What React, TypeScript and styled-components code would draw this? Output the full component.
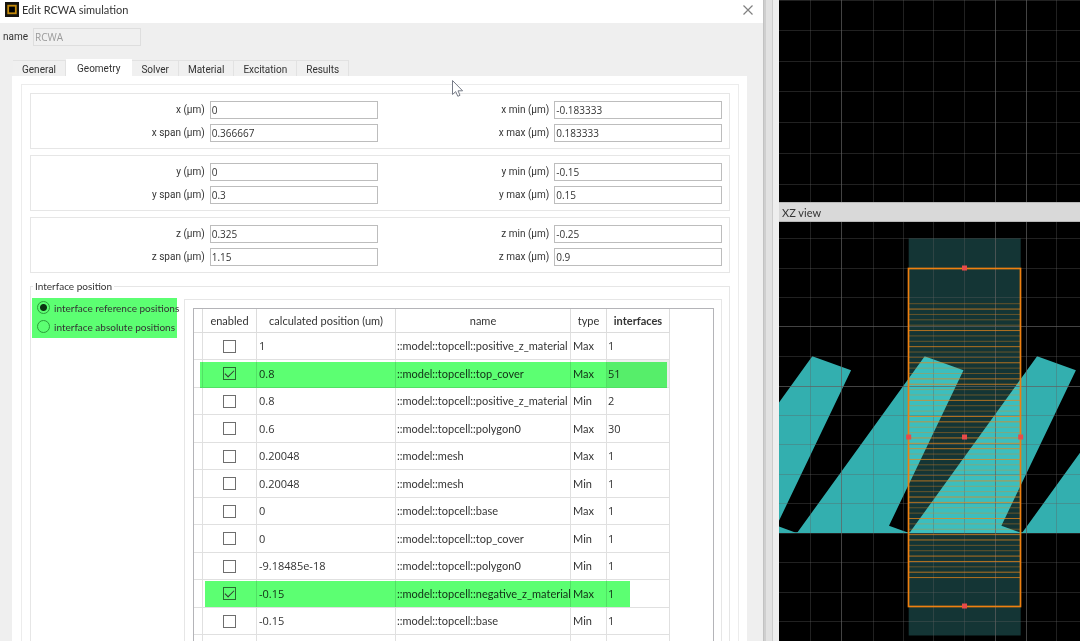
import React, { useState } from "react";
import styled, { createGlobalStyle, css } from "styled-components";

const valueFont = `"Open Sans", "Noto Sans", sans-serif`;
const headingFont = `Lato, "Open Sans", sans-serif`;

const GlobalStyle = createGlobalStyle`
  * { box-sizing: border-box; }
  body {
    margin: 0;
    background: #efefef;
    color: #333;
    font-family: Roboto, "Liberation Sans", sans-serif;
    font-size: 10px;
    line-height: 14px;
  }
  button, input { font: inherit; color: inherit; }
`;

const Page = styled.div`
  display: flex;
  height: 100vh;
  overflow: hidden;
`;

const Dialog = styled.main`
  position: relative;
  flex: 763 1 0;
  min-width: 0;
  display: flex;
  flex-direction: column;
`;

const TitleBar = styled.header`
  display: flex;
  align-items: center;
  flex: none;
  height: 23px;
  padding: 0 8px 4px 5px;
  gap: 3px;
  background: #fff;
`;

const Title = styled.h1`
  flex: 1;
  margin: 0;
  font-family: ${headingFont};
  font-size: 11px;
  font-weight: 400;
`;

const CloseButton = styled.button`
  display: flex;
  padding: 0;
  border: 0;
  background: none;
`;

const NameRow = styled.div`
  display: flex;
  align-items: center;
  flex: none;
  gap: 5px;
  padding: 5px 3px 13px;
`;

const NameInput = styled.input`
  width: 108px;
  height: 18px;
  padding: 0 1px;
  border: 1px solid #dedede;
  background: #f0f0f0;
  color: #9a9a9a;
  font-family: ${valueFont};
`;

const TabList = styled.div`
  display: flex;
  align-items: flex-end;
  flex: none;
  height: 17px;
  padding-left: 13px;
`;

const Tab = styled.button<{ $active: boolean }>`
  height: 16px;
  padding: 2px 9px 0;
  border: 1px solid #e2e2e2;
  border-width: 1px 1px 0 0;
  background: #f0f0f0;
  line-height: 12px;
  ${(p) =>
    p.$active &&
    css`
      height: 17px;
      padding: 1px 11px 0;
      border-color: #fff;
      background: #fff;
    `}
`;

const Pane = styled.section`
  flex: 1;
  min-height: 0;
  margin: 0 16px 0 12px;
  padding: 8px 8px 0 9px;
  background: #fff;
`;

const PaneFrame = styled.div`
  display: flex;
  flex-direction: column;
  gap: 6px;
  padding: 8px 8px 0;
  border: 1px solid #ececec;
  border-bottom: 0;
`;

const AxisGroup = styled.div`
  display: grid;
  grid-template-columns: 1fr 1fr;
  row-gap: 5px;
  padding: 7px 7px 6px 2px;
  border: 1px solid #e6e6e6;
`;

const Field = styled.label`
  display: grid;
  grid-template-columns: 172fr 168fr;
  column-gap: 5px;
  align-items: center;
  text-align: right;
`;

const ValueInput = styled.input`
  width: 100%;
  min-width: 0;
  height: 18px;
  padding: 0 1px;
  border: 1px solid #bdbdbd;
  background: #fff;
  font-family: ${valueFont};
`;

const InterfaceGroup = styled.fieldset`
  display: flex;
  align-items: flex-start;
  gap: 7px;
  min-width: 0;
  margin: 0;
  padding: 5px 7px 8px 1px;
  border: 1px solid #e6e6e6;
`;

const Legend = styled.legend`
  margin-left: 1px;
  padding: 0 2px;
  font-family: ${headingFont};
`;

const RadioList = styled.div`
  display: flex;
  flex-direction: column;
  justify-content: space-between;
  flex: none;
  width: 145px;
  height: 40px;
  padding: 2px 0 4px 5px;
  background: #5cff72;
  font-family: ${headingFont};
  white-space: nowrap;
`;

const RadioLabel = styled.label`
  display: flex;
  align-items: center;
  gap: 4px;
  height: 15px;
`;

const Radio = styled.input`
  appearance: none;
  flex: none;
  width: 13px;
  height: 13px;
  margin: 0;
  border: 1px solid #2c9c3a;
  border-radius: 50%;
  &:checked {
    background: radial-gradient(circle, #0b3512 0 3px, transparent 4px);
  }
`;

const TableFrame = styled.div`
  flex: 1;
  min-width: 0;
  margin-top: 1px;
  padding: 8px 7px 8px 8px;
  border: 1px solid #e6e6e6;
`;

const TableArea = styled.div`
  padding-right: 43px;
  border: 1px solid #b4b4b8;
`;

const Table = styled.table`
  width: 100%;
  table-layout: fixed;
  border-collapse: separate;
  border-spacing: 0;
  font-family: ${headingFont};
  font-size: 11px;
`;

const HeadCell = styled.th<{ $strong?: boolean }>`
  height: 24px;
  padding: 0;
  border: solid #dcdcdc;
  border-width: 0 1px 1px 0;
  font-weight: ${(p) => (p.$strong ? 700 : 400)};
  text-align: center;
  white-space: nowrap;
`;

const Row = styled.tr`
  position: relative;
  height: 27px;
  &:nth-child(even) { height: 28px; }
`;

const Cell = styled.td<{ $center?: boolean; $shaded?: boolean; $value?: boolean; $tight?: boolean }>`
  padding: 0 ${(p) => (p.$tight ? 1 : 2)}px;
  border: solid #e0e0e0;
  border-width: 0 1px 1px 0;
  background: ${(p) => (p.$shaded ? "#eeeeee" : "transparent")};
  font-family: ${(p) => (p.$value ? valueFont : "inherit")};
  text-align: ${(p) => (p.$center ? "center" : "left")};
  white-space: nowrap;
`;

const Marker = styled.span<{ $wide: boolean }>`
  position: absolute;
  inset: ${(p) => (p.$wide ? "2px 3px 0 6px" : "1px 40px 1px 11px")};
  background: #5cff72;
  mix-blend-mode: multiply;
  pointer-events: none;
`;

const CheckBox = styled.input`
  appearance: none;
  display: block;
  width: 13px;
  height: 13px;
  margin: 0 auto;
  border: 1px solid #6e6e6e;
  &:checked::after {
    content: "";
    display: block;
    width: 8px;
    height: 4px;
    margin: 2px 0 0 1px;
    border: solid #333;
    border-width: 0 0 1px 1px;
    transform: rotate(-45deg);
  }
`;

const Cursor = styled.svg`
  position: absolute;
  left: 451px;
  top: 79px;
`;

const Splitter = styled.div`
  flex: none;
  width: 16px;
  background: linear-gradient(
    to right,
    #c2c2c2 0 1px,
    #cfcfcf 1px 3px,
    #e2e2e2 3px 9px,
    #cccccc 9px 10px,
    #eeeeee 10px 16px
  );
`;

const Views = styled.aside`
  flex: 301 1 0;
  min-width: 0;
  display: flex;
  flex-direction: column;
  background: #000;
`;

const ViewHeader = styled.h2`
  flex: none;
  height: 20px;
  margin: 0;
  padding: 3px;
  border: solid #b8b8b8;
  border-width: 1px 0;
  background: #d9d9d9;
  font-family: ${headingFont};
  font-size: 11px;
  font-weight: 400;
`;

const TopCanvas = styled.svg`
  display: block;
  flex: none;
  width: 100%;
  height: 202px;
`;

const XZCanvas = styled.svg`
  display: block;
  flex: 1;
  width: 100%;
  min-height: 0;
`;

const axes = [
  { axis: "x", center: "0", span: "0.366667", min: "-0.183333", max: "0.183333" },
  { axis: "y", center: "0", span: "0.3", min: "-0.15", max: "0.15" },
  { axis: "z", center: "0.325", span: "1.15", min: "-0.25", max: "0.9" },
];

type InterfaceRow = {
  enabled?: boolean;
  marker?: "wide" | "narrow";
  position: string;
  name: string;
  type: "Max" | "Min";
  count: string;
};

const rows: InterfaceRow[] = [
  { position: "1", name: "::model::topcell::positive_z_material", type: "Max", count: "1" },
  { position: "0.8", name: "::model::topcell::top_cover", type: "Max", count: "51", enabled: true, marker: "wide" },
  { position: "0.8", name: "::model::topcell::positive_z_material", type: "Min", count: "2" },
  { position: "0.6", name: "::model::topcell::polygon0", type: "Max", count: "30" },
  { position: "0.20048", name: "::model::mesh", type: "Max", count: "1" },
  { position: "0.20048", name: "::model::mesh", type: "Min", count: "1" },
  { position: "0", name: "::model::topcell::base", type: "Max", count: "1" },
  { position: "0", name: "::model::topcell::top_cover", type: "Min", count: "1" },
  { position: "-9.18485e-18", name: "::model::topcell::polygon0", type: "Min", count: "1" },
  { position: "-0.15", name: "::model::topcell::negative_z_material", type: "Max", count: "1", enabled: true, marker: "narrow" },
  { position: "-0.15", name: "::model::topcell::base", type: "Min", count: "1" },
  { position: "", name: "", type: "Min", count: "" },
];

const tabs = ["General", "Geometry", "Solver", "Material", "Excitation", "Results"];

const gridX = [31.5, 62.5, 94.5, 124.5, 154.5, 185.5, 216.5, 247.5, 277.5];
const strongX = [62.5, 216.5, 247.5];
const topGridY = [0.5, 30.5, 61.5, 91.5, 122.5, 153.5, 184.5];
const xzGridY = [16.5, 46.5, 75.5, 104.5, 134.5, 164.5, 193.5, 222.5, 252.5, 281.5, 311.5, 340.5, 370.5, 399.5];
const strongXZ = [104.5, 164.5];

const layerCount = 52;
const strongLayers = [1, 5, 8, 11, 14, 15, 18, 21, 22, 25, 26, 27, 29, 33, 36, 37, 40, 43, 44, 47, 48, 50, 51];

function Grid({ xs, ys, strongYs }: { xs: number[]; ys: number[]; strongYs: number[] }) {
  return (
    <g stroke="#606060">
      {xs.map((x) => (
        <line key={`x${x}`} x1={x} x2={x} y1="0" y2="1000" opacity={strongX.includes(x) ? 0.7 : 0.35} />
      ))}
      {ys.map((y) => (
        <line key={`y${y}`} y1={y} y2={y} x1="0" x2="1000" opacity={strongYs.includes(y) ? 0.7 : 0.35} />
      ))}
    </g>
  );
}

function XZView() {
  return (
    <XZCanvas role="img" aria-label="XZ view of the slanted grating">
      <g fill="#33afaf">
        {[-112.4, 0, 112.4, 225].map((dx) => (
          <polygon key={dx} transform={`translate(${dx} 0)`} points="145.7,134.3 184.5,148.3 110,303.7 128,310.3 128,311 18,311" />
        ))}
        <rect x="0" y="310" width="301" height="1" opacity="0.8" />
      </g>
      <rect x="129.7" y="16.3" width="112" height="397.2" fill="rgb(92,244,244)" opacity="0.217" />
      <Grid xs={gridX} ys={xzGridY} strongYs={strongXZ} />
      <g stroke="#e8861a">
        {Array.from({ length: layerCount }, (_, i) => {
          const y = 81.7 + i * 5.37;
          return <line key={i} x1="130" x2="241" y1={y} y2={y} opacity={strongLayers.includes(i) ? 0.75 : 0.38} />;
        })}
      </g>
      <rect x="129.5" y="46.5" width="112" height="338" fill="none" stroke="#ee8010" strokeWidth="1.7" />
      <g fill="#e84a4a">
        {[[185.5, 46], [129.7, 215], [185.5, 215], [241.7, 215], [185.5, 384]].map(([x, y]) => (
          <rect key={`${x}-${y}`} x={x - 2.5} y={y - 2.5} width="5" height="5" />
        ))}
      </g>
    </XZCanvas>
  );
}

export default function App() {
  const [activeTab, setActiveTab] = useState("Geometry");

  return (
    <>
      <GlobalStyle />
      <Page>
        <Dialog>
          <TitleBar>
            <svg width="14" height="15" viewBox="0 0 14 15" aria-hidden="true">
              <rect width="14" height="15" fill="#15130e" />
              <rect x="3.2" y="3.7" width="7.6" height="7.6" fill="#000" stroke="#c48a0a" strokeWidth="1.8" />
            </svg>
            <Title>Edit RCWA simulation</Title>
            <CloseButton type="button" aria-label="Close">
              <svg width="14" height="14" viewBox="0 0 14 14" stroke="#808080" strokeWidth="1.2" fill="none">
                <path d="M2.5 2.5 11.5 11.5M11.5 2.5 2.5 11.5" />
              </svg>
            </CloseButton>
          </TitleBar>
          <NameRow>
            <label htmlFor="sim-name">name</label>
            <NameInput id="sim-name" defaultValue="RCWA" disabled />
          </NameRow>
          <TabList role="tablist">
            {tabs.map((tab) => (
              <Tab
                key={tab}
                type="button"
                role="tab"
                aria-selected={tab === activeTab}
                $active={tab === activeTab}
                onClick={() => setActiveTab(tab)}
              >
                {tab}
              </Tab>
            ))}
          </TabList>
          <Pane>
            <PaneFrame>
              {axes.map(({ axis, center, span, min, max }) => (
                <AxisGroup key={axis}>
                  <Field>{axis} (µm)<ValueInput defaultValue={center} /></Field>
                  <Field>{axis} min (µm)<ValueInput defaultValue={min} /></Field>
                  <Field>{axis} span (µm)<ValueInput defaultValue={span} /></Field>
                  <Field>{axis} max (µm)<ValueInput defaultValue={max} /></Field>
                </AxisGroup>
              ))}
              <InterfaceGroup>
                <Legend>Interface position</Legend>
                <RadioList>
                  <RadioLabel><Radio type="radio" name="interface" defaultChecked />interface reference positions</RadioLabel>
                  <RadioLabel><Radio type="radio" name="interface" />interface absolute positions</RadioLabel>
                </RadioList>
                <TableFrame>
                  <TableArea>
                    <Table>
                      <colgroup>
                        <col style={{ width: "9px" }} />
                        <col style={{ width: "54px" }} />
                        <col style={{ width: "139px" }} />
                        <col />
                        <col style={{ width: "36px" }} />
                        <col style={{ width: "63px" }} />
                      </colgroup>
                      <thead>
                        <tr>
                          <HeadCell aria-label="row" />
                          <HeadCell>enabled</HeadCell>
                          <HeadCell>calculated position (um)</HeadCell>
                          <HeadCell>name</HeadCell>
                          <HeadCell>type</HeadCell>
                          <HeadCell $strong>interfaces</HeadCell>
                        </tr>
                      </thead>
                      <tbody>
                        {rows.map((row, i) => (
                          <Row key={i}>
                            <Cell>{row.marker && <Marker $wide={row.marker === "wide"} />}</Cell>
                            <Cell $center>
                              <CheckBox type="checkbox" aria-label={`enable ${row.name} ${row.type}`} defaultChecked={row.enabled} />
                            </Cell>
                            <Cell $value>{row.position}</Cell>
                            <Cell $tight>{row.name}</Cell>
                            <Cell>{row.name && row.type}</Cell>
                            <Cell $value $tight $shaded={row.marker === "wide"}>{row.count}</Cell>
                          </Row>
                        ))}
                      </tbody>
                    </Table>
                  </TableArea>
                </TableFrame>
              </InterfaceGroup>
            </PaneFrame>
          </Pane>
          <Cursor width="13" height="19" viewBox="0 0 13 19" aria-hidden="true">
            <path d="M1.5 1.5V15.5L4.7 12.6L6.8 17.3L9 16.3L7 11.8H11.6Z" fill="#fff" stroke="#777c88" />
          </Cursor>
        </Dialog>
        <Splitter />
        <Views>
          <TopCanvas role="img" aria-label="XY view">
            <Grid xs={gridX} ys={topGridY} strongYs={[]} />
          </TopCanvas>
          <ViewHeader>XZ view</ViewHeader>
          <XZView />
        </Views>
      </Page>
    </>
  );
}
